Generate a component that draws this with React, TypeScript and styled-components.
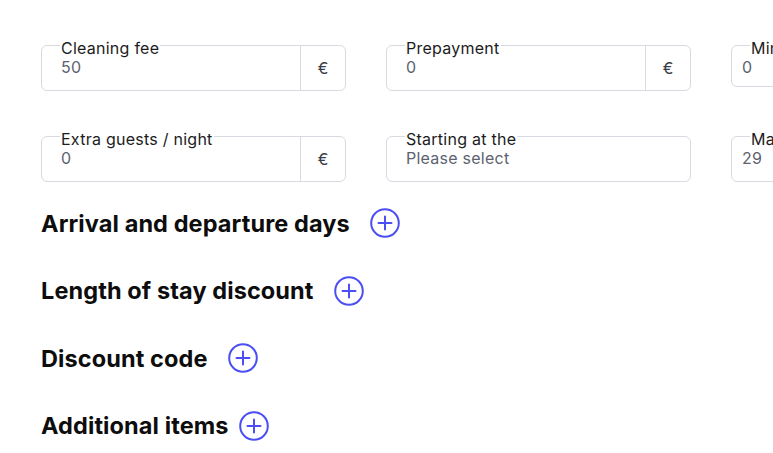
import styled, { createGlobalStyle } from "styled-components";

const GlobalStyle = createGlobalStyle`
  html, body {
    margin: 0;
    padding: 0;
    background: #ffffff;
    overflow: hidden;
  }
  body {
    font-family: Inter, "Noto Sans", "Liberation Sans", sans-serif;
    color: #111111;
  }
`;

const Page = styled.div`
  width: 773px;
  height: 453px;
  padding: 45px 0 0 41px;
  box-sizing: border-box;
  overflow: hidden;
`;

const FieldGrid = styled.div`
  display: grid;
  grid-template-columns: repeat(3, 305px);
  column-gap: 40px;
  row-gap: 45px;
  width: 1000px;
`;

const FieldBox = styled.div<{ $compact?: boolean }>`
  position: relative;
  display: flex;
  height: ${(p) => (p.$compact ? 42 : 46)}px;
  box-sizing: border-box;
  border: 1px solid #d7dae0;
  border-radius: 6px;
  background: #fff;
`;

const FloatLabel = styled.span`
  position: absolute;
  top: -7px;
  left: 18px;
  padding: 0 1px;
  background: #fff;
  font-size: 16px;
  line-height: 18px;
  letter-spacing: 0.25px;
  color: #1c1c1c;
  white-space: nowrap;
`;

const ValueArea = styled.div<{ $inset: number }>`
  flex: 1;
  display: flex;
  align-items: flex-start;
  padding: 11px 0 0 ${(p) => p.$inset}px;
  font-size: 16px;
  line-height: 20px;
  letter-spacing: 0.25px;
  color: #5d6270;
`;

const Suffix = styled.div`
  width: 44px;
  border-left: 1px solid #d7dae0;
  display: flex;
  align-items: center;
  justify-content: center;
  font-size: 16px;
  color: #3a3d45;
`;

const Sections = styled.div`
  margin-top: 26px;
  display: flex;
  flex-direction: column;
  gap: 37.5px;
`;

const SectionRow = styled.div<{ $tight?: boolean }>`
  display: flex;
  align-items: center;
  gap: ${(p) => (p.$tight ? 10 : 20)}px;
  height: 30px;
`;

const SectionTitle = styled.h3`
  margin: 0;
  font-size: 23.5px;
  font-weight: 700;
  letter-spacing: 0.1px;
  color: #0d0d0d;
`;

const AddButton = styled.button`
  width: 30px;
  height: 30px;
  padding: 0;
  border: none;
  background: none;
  display: flex;
  cursor: pointer;
`;

type Field = {
  label: string;
  value: string;
  suffix?: string;
  compact?: boolean;
  inset?: number;
};

const fields: Field[] = [
  { label: "Cleaning fee", value: "50", suffix: "€" },
  { label: "Prepayment", value: "0", suffix: "€" },
  { label: "Minimum stay", value: "0", compact: true, inset: 10 },
  { label: "Extra guests / night", value: "0", suffix: "€" },
  { label: "Starting at the", value: "Please select" },
  { label: "Maximum stay", value: "29", inset: 10 },
];

const sections = [
  { title: "Arrival and departure days" },
  { title: "Length of stay discount" },
  { title: "Discount code" },
  { title: "Additional items", tight: true },
];

const PlusCircle = () => (
  <svg width="30" height="30" viewBox="0 0 30 30" fill="none">
    <circle cx="15" cy="15" r="13.8" stroke="#4b4ef2" strokeWidth="2" />
    <path d="M15 8.5v13M8.5 15h13" stroke="#4b4ef2" strokeWidth="2" strokeLinecap="round" />
  </svg>
);

export default function App() {
  return (
    <>
      <GlobalStyle />
      <Page>
        <FieldGrid>
          {fields.map((f) => (
            <FieldBox key={f.label} $compact={f.compact}>
              <FloatLabel>{f.label}</FloatLabel>
              <ValueArea $inset={f.inset ?? 19}>{f.value}</ValueArea>
              {f.suffix && <Suffix>{f.suffix}</Suffix>}
            </FieldBox>
          ))}
        </FieldGrid>
        <Sections>
          {sections.map((s) => (
            <SectionRow key={s.title} $tight={s.tight}>
              <SectionTitle>{s.title}</SectionTitle>
              <AddButton aria-label={`Add ${s.title}`}>
                <PlusCircle />
              </AddButton>
            </SectionRow>
          ))}
        </Sections>
      </Page>
    </>
  );
}
